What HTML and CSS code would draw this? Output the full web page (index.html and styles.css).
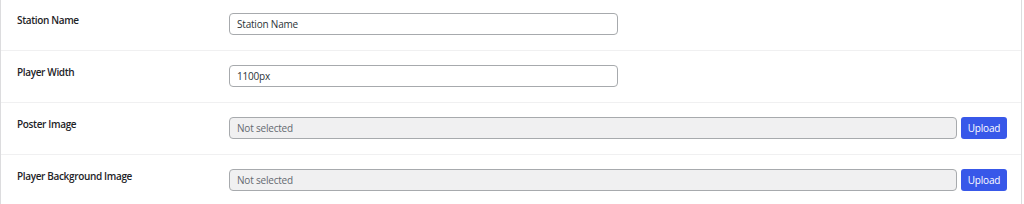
FILE: index.html
```html
<!DOCTYPE html>
<html lang="en">
<head>
<meta charset="utf-8">
<title>Player Settings</title>
<link rel="stylesheet" href="styles.css">
</head>
<body>
<div class="panel">
  <div class="row">
    <div class="label">Station Name</div>
    <div class="field"><input class="text" type="text" value="Station Name"></div>
  </div>
  <div class="row">
    <div class="label">Player Width</div>
    <div class="field"><input class="text" type="text" value="1100px"></div>
  </div>
  <div class="row">
    <div class="label">Poster Image</div>
    <div class="field wide"><input class="text readonly" type="text" value="Not selected" readonly><button class="upload" type="button">Upload</button></div>
  </div>
  <div class="row">
    <div class="label">Player Background Image</div>
    <div class="field wide"><input class="text readonly" type="text" value="Not selected" readonly><button class="upload" type="button">Upload</button></div>
  </div>
</div>
</body>
</html>
```
FILE: styles.css
```css
html, body {
  margin: 0;
  padding: 0;
  background: #ffffff;
}
body {
  font-family: "Open Sans", "Noto Sans", sans-serif;
  color: #1d2327;
}
.panel {
  width: 1020px;
  margin-top: -1px;
  border-left: 1px solid #dcdcde;
  border-right: 1px solid #dcdcde;
  background: #ffffff;
}
.row {
  display: grid;
  grid-template-columns: 228px 1fr;
  align-items: start;
  height: 51px;
  border-bottom: 1px solid #f0f0f1;
  box-sizing: content-box;
}
.label {
  padding: 13px 0 0 16px;
  font-size: 10px;
  line-height: 16px;
  font-weight: 600;
  letter-spacing: -0.35px;
  color: #1d2327;
}
.field {
  display: flex;
  gap: 4px;
  padding: 14px 14px 0 0;
}
.text {
  box-sizing: border-box;
  width: 389px;
  height: 22px;
  margin: 0;
  padding: 0 7px;
  border: 1px solid #a7aaad;
  border-radius: 4px;
  background: #ffffff;
  font-family: "Open Sans", "Noto Sans", sans-serif;
  font-size: 10px;
  letter-spacing: -0.2px;
  color: #2c3338;
  outline: none;
}
.wide .text {
  flex: 1;
  width: auto;
}
.readonly {
  background: #f0f0f1;
  color: #646970;
}
.upload {
  box-sizing: border-box;
  width: 46px;
  height: 22px;
  margin: 0;
  padding: 0;
  border: none;
  border-radius: 3px;
  background: #3858e9;
  color: #ffffff;
  font-family: "Open Sans", "Noto Sans", sans-serif;
  font-size: 10px;
  letter-spacing: -0.2px;
  cursor: pointer;
}
```
